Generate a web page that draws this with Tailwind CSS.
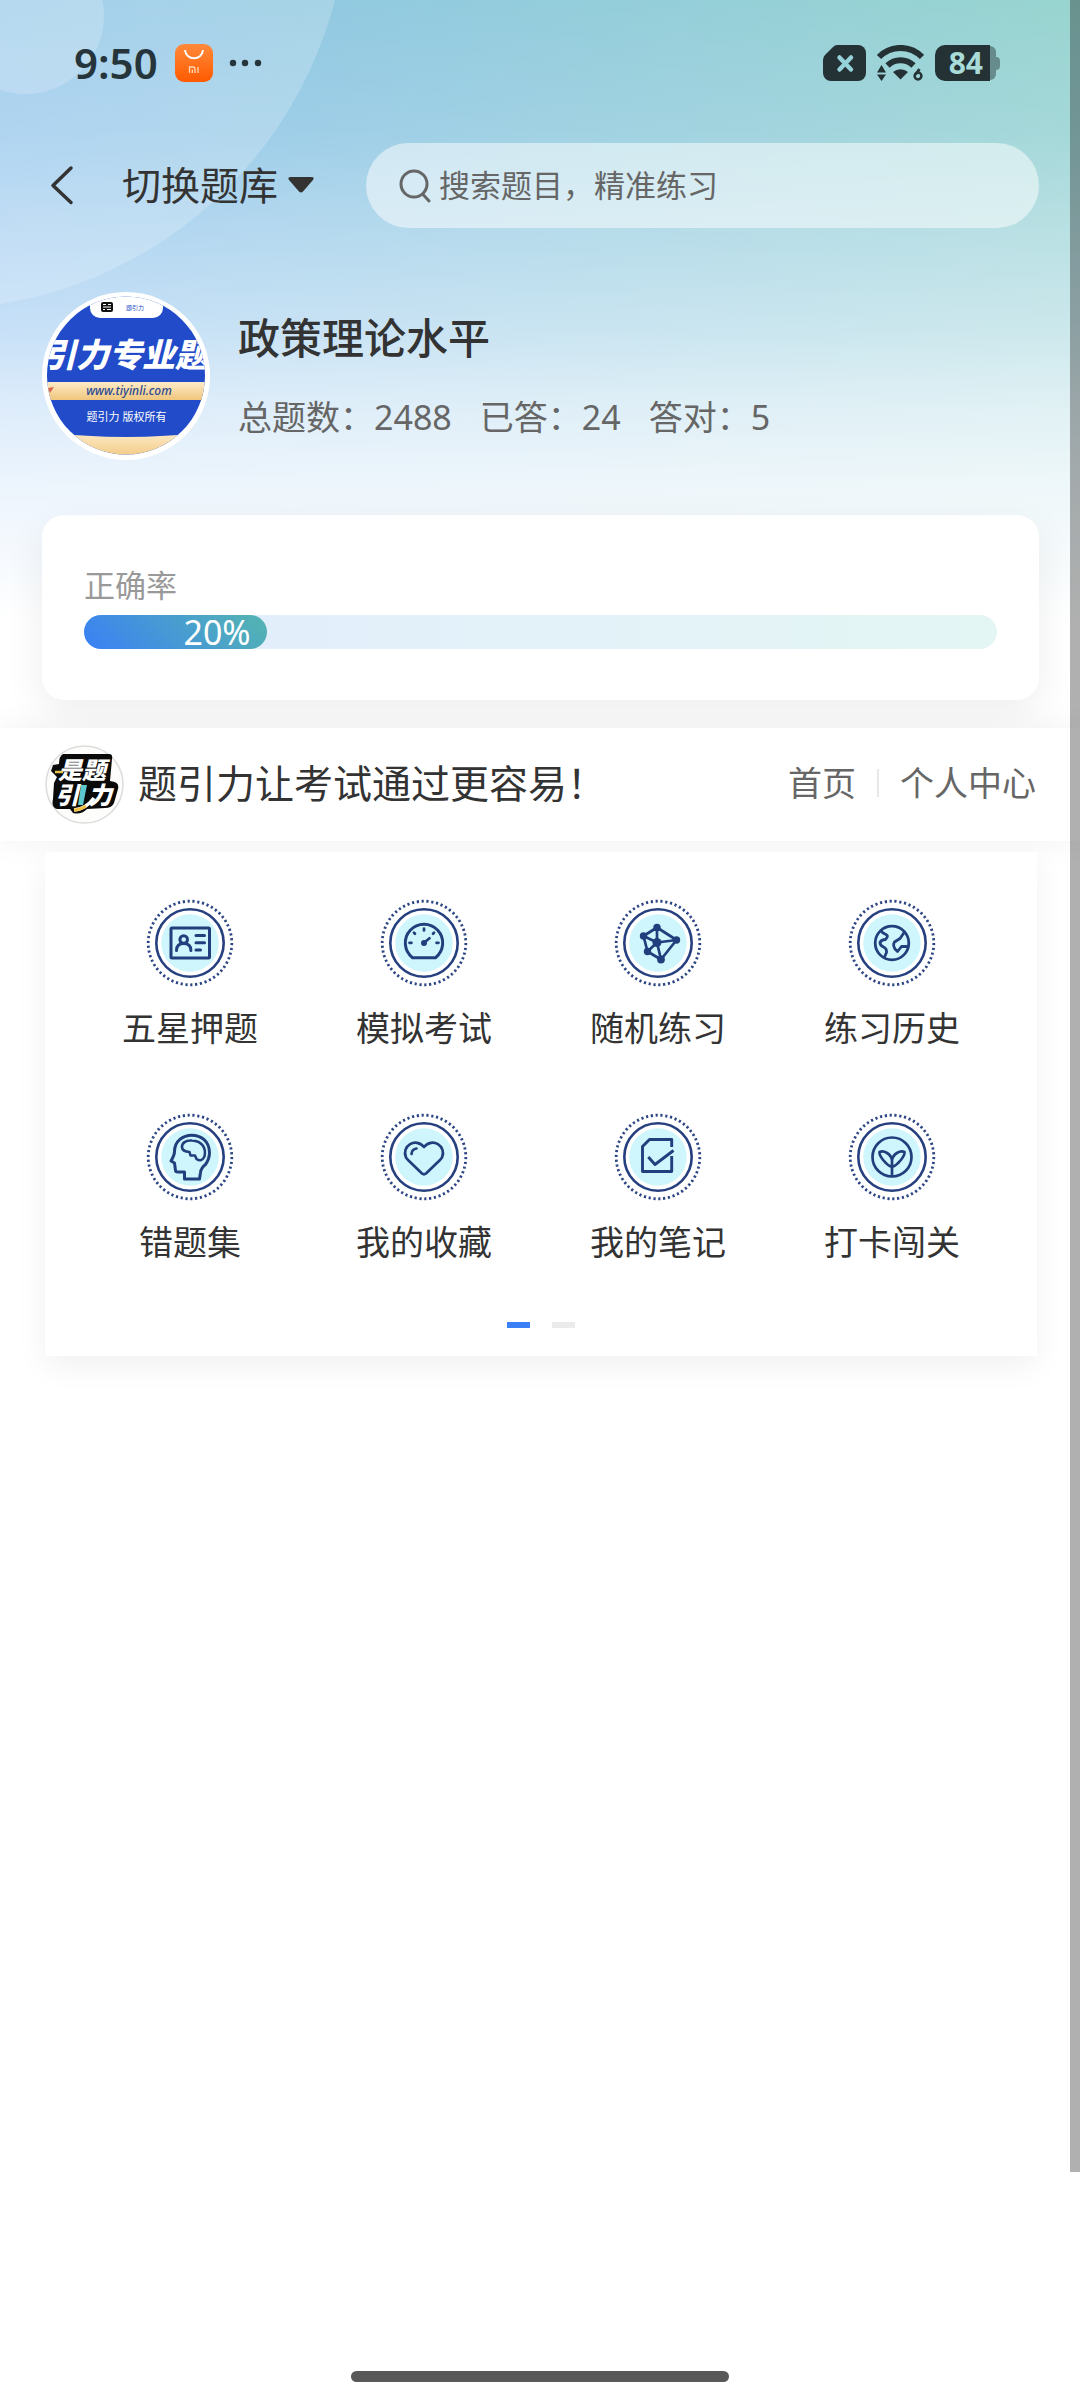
<!DOCTYPE html>
<html lang="zh-CN">
<head>
<meta charset="utf-8">
<meta name="viewport" content="width=device-width, initial-scale=1">
<title>题引力</title>
<script src="https://cdn.jsdelivr.net/npm/@tailwindcss/browser@4"></script>
</head>
<body class="bg-white">
<div class="relative flex min-h-screen flex-col overflow-hidden bg-[linear-gradient(180deg,rgba(255,255,255,0.4)_0px,rgba(255,255,255,0.48)_130px,rgba(255,255,255,0.61)_240px,rgba(255,255,255,0.71)_330px,rgba(255,255,255,0.82)_400px,rgba(255,255,255,0.9)_480px,rgba(255,255,255,0.95)_550px,#ffffff_620px),linear-gradient(45deg,#3a8ef0,#54b8b0)] bg-[length:100%_620px] bg-no-repeat font-['Noto_Sans','Noto_Sans_CJK_SC',sans-serif] text-[#333]">

  <!-- decorative circles -->
  <div class="absolute -left-[476px] -top-[515px] size-[824px] rounded-full bg-white/20"></div>
  <div class="absolute -left-[53px] -top-[63px] size-[157px] rounded-full bg-white/20"></div>

  <!-- status bar -->
  <div class="relative flex h-[126px] items-center pl-[74px] pr-[80px] text-[#25353b]">
    <span class="text-[42px] leading-[48px] font-semibold">9:50</span>
    <svg class="ml-[17px] h-[38px] w-[38px]" viewBox="0 0 38 38" fill="none">
      <defs><linearGradient id="mi" x1="0" y1="0" x2="0" y2="1"><stop offset="0" stop-color="#ff8a3a"/><stop offset="1" stop-color="#ff5a00"/></linearGradient></defs>
      <rect width="38" height="38" rx="9" fill="url(#mi)"/>
      <path d="M10 6c1 11 17 11 18 0" stroke="#fff" stroke-width="2"/>
      <path d="M14.500 29v-6h3.500q2 0 2 2v4M17.300 25.500V29M23 23v6" stroke="#ffd9b8" stroke-width="1.300"/>
    </svg>
    <svg class="ml-[16px] h-[8px] w-[34px]" viewBox="0 0 34 8" fill="currentColor"><circle cx="4" cy="4" r="3.200"/><circle cx="16" cy="4" r="3.200"/><circle cx="29" cy="4" r="3.200"/></svg>
    <svg class="ml-auto h-[36px] w-[43px]" viewBox="0 0 43 36"><path d="M14 0H35a8 8 0 0 1 8 8V28a8 8 0 0 1-8 8H8a8 8 0 0 1-8-8V15q0-3 2-5L10 2q2-2 4-2Z" fill="#243236"/><path d="M16.500 12.500 28 24.500M28 12.500 16.500 24.500" stroke="#96d2da" stroke-width="4.500" stroke-linecap="round"/></svg>
    <svg class="ml-[10px] h-[36px] w-[48px]" viewBox="0 0 48 36" fill="#243236">
      <path d="M3 12a30 30 0 0 1 43 0" fill="none" stroke="#243236" stroke-width="6"/>
      <path d="M11.500 20.500a18.500 18.500 0 0 1 26 0" fill="none" stroke="#243236" stroke-width="6"/>
      <path d="M17 27a11.500 11.500 0 0 1 15 0L24.500 34.500Z"/>
      <path d="M1 27.500 5.500 20 10 27.500ZM1 29.500H10L5.500 36Z"/>
      <path d="M43.500 24 39.500 29.500" fill="none" stroke="#243236" stroke-width="2.800"/><circle cx="42" cy="31" r="3.400" fill="none" stroke="#243236" stroke-width="2.500"/>
    </svg>
    <div class="ml-[11px] flex items-center">
      <div class="flex h-[36px] w-[55px] items-center justify-end rounded-l-[10px] bg-[#243236] pr-[7px] text-[30px] leading-[36px] font-bold text-[#a9dcd9]">84</div>
      <div class="h-[34px] w-[6px] rounded-r-[8px] bg-[#243236]/45"></div>
      <div class="h-[13px] w-[4px] rounded-r-[4px] bg-[#243236]/45"></div>
    </div>
  </div>

  <!-- header -->
  <header class="relative mt-[17px] flex h-[85px] items-center pl-[42px] pr-[41px]">
    <button type="button" aria-label="返回" class="h-[44px] w-[42px]"><svg class="h-[44px] w-[42px]" viewBox="0 0 42 44" fill="none" stroke="#333" stroke-width="3.500" stroke-linecap="round" stroke-linejoin="round"><path d="M29 4 11 21.500 29 38.500"/></svg></button>
    <button type="button" class="ml-[38px] flex items-center gap-[10px] pb-[2px] text-[39px] leading-[48px]">切换题库<svg class="h-[18px] w-[26px]" viewBox="0 0 26 18" fill="#333"><path d="M3 1H23q4 0 2 3L15 15.500q-2 2-4 0L1 4Q-1 1 3 1Z"/></svg></button>
    <label class="ml-[52px] flex h-full flex-1 items-center rounded-full bg-white/50 pl-[33px] text-[#666]">
      <svg class="h-[34px] w-[32px]" viewBox="0 0 32 34" fill="none" stroke="#666" stroke-width="3" stroke-linecap="round"><circle cx="15" cy="15" r="13"/><path d="M24.500 26 30 32"/></svg>
      <input type="search" aria-label="搜索题目" placeholder="搜索题目，精准练习" class="ml-[8px] h-full min-w-0 flex-1 bg-transparent pb-[2px] text-[31px] outline-none placeholder:text-[#666]">
    </label>
  </header>

  <!-- profile -->
  <section class="relative mt-[64px] flex h-[168px] items-center pl-[42px]">
    <svg class="size-[168px]" viewBox="0 0 168 168" role="img" aria-label="题引力专业题库">
      <defs>
        <clipPath id="av"><circle cx="84" cy="83.500" r="79"/></clipPath>
        <linearGradient id="gold" x1="0" y1="0" x2="0" y2="1"><stop offset="0" stop-color="#fdebc8"/><stop offset="1" stop-color="#f0c67c"/></linearGradient>
      </defs>
      <circle cx="84" cy="84" r="84" fill="#fff"/>
      <g clip-path="url(#av)">
        <rect width="168" height="168" fill="#214bc8"/>
        <rect x="48" y="-10" width="73" height="36" rx="10" fill="#fff"/>
        <rect x="59" y="10" width="12" height="10" rx="2" fill="#111"/>
        <path d="M61 12.500h3M66 12.500h3M61 15h8M61 17.500h2M65 17.500h4" stroke="#fff"/>
        <text x="84" y="18" font-size="6" fill="#214bc8">题引力</text>
        <text x="1" y="75" font-size="33" font-weight="900" font-style="italic" fill="#fff">引力专业题</text>
        <rect y="90" width="168" height="18" fill="url(#gold)"/>
        <path d="m6 96 6-1-4 6Z" fill="#d9654f"/>
        <text x="87" y="103" text-anchor="middle" font-size="12" font-weight="500" font-style="italic" fill="#2a4a94">www.tiyinli.com</text>
        <text x="84.500" y="129" text-anchor="middle" font-size="11" fill="#fff">题引力 版权所有</text>
        <path d="M0 140Q84 150 168 140V168H0Z" fill="url(#gold)"/>
      </g>
    </svg>
    <div class="ml-[28px] pt-[3px]">
      <h1 class="text-[42px] leading-[52px] font-medium">政策理论水平</h1>
      <p class="mt-[27px] flex gap-[28px] text-[34px] leading-[52px] text-[#666]"><span>总题数：2488</span><span>已答：24</span><span>答对：5</span></p>
    </div>
  </section>

  <!-- accuracy -->
  <section class="relative mt-[55px] ml-[42px] mr-[41px] h-[185px] rounded-[22px] bg-white px-[42px] pt-[50px] shadow-[0_14px_40px_rgba(0,0,0,0.07)]">
    <h2 class="text-[31px] leading-[40px] text-[#999]">正确率</h2>
    <div class="mt-[10px] h-[34px] rounded-full bg-linear-to-r from-[#e2edfd] to-[#e4f6f4]">
      <div class="flex h-full items-center justify-end rounded-full bg-[linear-gradient(45deg,#3a80f5,#54b5b0)] pr-[16px] text-[34px] leading-[34px] text-white" style="width:20%">20%</div>
    </div>
  </section>

  <!-- brand bar -->
  <nav class="relative mt-[28px] flex h-[113px] items-center bg-white pl-[45px] pr-[44px] shadow-[0_0_30px_rgba(0,0,0,0.06)]">
    <svg class="size-[79px]" viewBox="0 0 79 79" role="img" aria-label="题引力">
      <circle cx="39.500" cy="39.500" r="38.500" fill="#fdfdfb" stroke="#dcdcdc" stroke-width="1.500"/>
      <path d="M18 9H64Q68 9 67 14L65 36Q75 37 73 44L69 58Q67 63 60 63L42 64Q36 70 28 68L25 64H12Q6 62 8 54L9 38 12 32 6 26 8 20 14 19Q14 11 18 9Z" fill="#0a0a0a"/>
      <text font-size="24" font-weight="900" font-style="italic" fill="#fff"><tspan x="13" y="34">是题</tspan><tspan x="10" y="59">引</tspan><tspan x="43" y="59">力</tspan></text>
      <path d="M10 27h8" stroke="#e6c34c" stroke-width="2.500"/>
      <path d="M36 40h6l-4 20h-5Z" fill="#5cc9cf"/>
      <path d="M29 65q12-1 20-12" stroke="#fff" stroke-width="3.500" fill="none"/><path d="M29 65q6 0 12-4" stroke="#f0c040" stroke-width="3" fill="none"/>
    </svg>
    <span class="ml-[14px] pb-[3px] text-[39px] leading-[48px]">题引力让考试通过更容易！</span>
    <div class="ml-auto flex items-center pb-[3px] text-[34px] leading-[48px] text-[#666]">
      <a href="#">首页</a>
      <span class="mx-[21px] h-[28px] w-[2px] bg-[#e8e8e8]"></span>
      <a href="#">个人中心</a>
    </div>
  </nav>

  <!-- shared ring around each menu icon -->
  <svg class="absolute size-0" aria-hidden="true"><defs>
    <g id="ring" stroke-linecap="butt">
      <circle cx="44" cy="44" r="41.800" fill="none" stroke="#2c4583" stroke-width="2.800" pathLength="108" stroke-dasharray=".9 1.1"/>
      <circle cx="44" cy="44" r="33.700" fill="#fff" stroke="#26407f" stroke-width="2.600"/>
      <circle cx="44" cy="44" r="28.800" fill="#cff6fc" stroke="none"/>
    </g>
  </defs></svg>

  <!-- menu -->
  <main class="relative mt-[11px] ml-[45px] mr-[43px] bg-white px-[28px] pt-[47px] pb-[28px] shadow-[0_10px_30px_rgba(0,0,0,0.06)]">
    <div class="grid grid-cols-4 gap-y-[65px] text-[34px] leading-[40px]">
      <a href="#" class="flex flex-col items-center gap-[21px]">
        <svg class="size-[88px]" viewBox="0 0 88 88" fill="none" stroke="#213f7d" stroke-width="3" stroke-linecap="round" stroke-linejoin="round"><use href="#ring"/>
          <rect x="25" y="29" width="38.500" height="30" rx="1"/><circle cx="37.700" cy="40.500" r="3.800"/><path d="M30.500 51.500q0-7 7.200-7t7.200 7M50 36.500h8.500M50 43.800h8.500M50 51h4.500"/></svg>五星押题</a>
      <a href="#" class="flex flex-col items-center gap-[21px]">
        <svg class="size-[88px]" viewBox="0 0 88 88" fill="none" stroke="#213f7d" stroke-width="3" stroke-linecap="round" stroke-linejoin="round"><use href="#ring"/>
          <path d="M32.500 58.700A18.700 18.700 0 1 1 55.500 58.700Z"/><path d="M29.500 43.800h2M56.500 43.800h2M44 29.500v2M34 33.700l1 1M54 33.700l-1 1M44 43.800l5.500-4.500" stroke-width="2.700"/><circle cx="44" cy="44" r="1.500" fill="#213f7d"/></svg>模拟考试</a>
      <a href="#" class="flex flex-col items-center gap-[21px]">
        <svg class="size-[88px]" viewBox="0 0 88 88" fill="none" stroke="#213f7d" stroke-width="2.700" stroke-linecap="round" stroke-linejoin="round"><use href="#ring"/>
          <path d="M43 28.500 29.500 37 33.500 52.500 47 60.500 62.500 41ZM43 43.500V28.500M43 43.500 29.500 37M43 43.500 33.500 52.500M43 43.500 47 60.500M43 43.500 62.500 41"/><g fill="#213f7d" stroke="none"><circle cx="43" cy="28.500" r="3.700"/><circle cx="29.500" cy="37" r="3.700"/><circle cx="33.500" cy="52.500" r="3.700"/><circle cx="47" cy="60.500" r="3.900"/><circle cx="62.500" cy="41" r="3.700"/><circle cx="43" cy="43.500" r="4.500"/></g></svg>随机练习</a>
      <a href="#" class="flex flex-col items-center gap-[21px]">
        <svg class="size-[88px]" viewBox="0 0 88 88" fill="none" stroke="#213f7d" stroke-width="2.800" stroke-linecap="round" stroke-linejoin="round"><use href="#ring"/>
          <circle cx="44" cy="44" r="16.800"/><path d="M33 31.500Q34 34 38 35.500q2 1 1 3l-1.500 2q-4 0-5.500 3 0 3 3.500 4.500 3.500 1.500 3 5.500L36.500 58M56.500 33l-4.500 6.500-5.500 3.500q-2 3 .5 7l2.500 2.500 4-5h5"/></svg>练习历史</a>
      <a href="#" class="flex flex-col items-center gap-[21px]">
        <svg class="size-[88px]" viewBox="0 0 88 88" fill="none" stroke="#213f7d" stroke-width="3" stroke-linecap="round" stroke-linejoin="round"><use href="#ring"/>
          <path d="M38.500 66H53.500L54.500 59.500Q55 55 59.500 51.500 63.500 46 63.500 39.500C63 16 28.500 17 28.500 38.500Q28.500 42 25 48L28.500 50 29.500 57.500Q29.500 59 32 59H38.500Z"/><path d="M46 27.500C40 27 35.500 30 36 34.500Q36.500 38.500 43.500 39l1 3.500 4.500 0 1.500 3.500q5 3.500 8-2.500C60.500 35 56 28 46 27.500Z" stroke-width="2.600"/></svg>错题集</a>
      <a href="#" class="flex flex-col items-center gap-[21px]">
        <svg class="size-[88px]" viewBox="0 0 88 88" fill="none" stroke="#213f7d" stroke-width="2.700" stroke-linecap="round" stroke-linejoin="round"><use href="#ring"/>
          <path d="M44 34C36 24 21 33 26 44.500Q27 46 28.500 47.500L42 60.500q2 1.500 4 0L59.500 47.500Q61 46 62 44.500C67 33 52 24 44 34Z"/><path d="M31.500 41Q32 36 36.500 35.500"/></svg>我的收藏</a>
      <a href="#" class="flex flex-col items-center gap-[21px]">
        <svg class="size-[88px]" viewBox="0 0 88 88" fill="none" stroke="#213f7d" stroke-width="2.900" stroke-linejoin="round"><use href="#ring"/>
          <path d="M57.700 34V26.500H35.500L28.500 33.500V58.500H57.700V43"/><path d="M34.300 44 41 51.500 59.500 37.500"/></svg>我的笔记</a>
      <a href="#" class="flex flex-col items-center gap-[21px]">
        <svg class="size-[88px]" viewBox="0 0 88 88" fill="none" stroke="#213f7d" stroke-width="2.700" stroke-linecap="round" stroke-linejoin="round"><use href="#ring"/>
          <circle cx="44" cy="44" r="19.500"/><path d="M44 46V63M44 54C38 52 31 43 31.500 39 36 37 43 41 44 47 45 41 52 37 56.500 39 57 43 50 52 44 54Z"/></svg>打卡闯关</a>
    </div>
    <div class="mt-[60px] flex justify-center gap-[22px]">
      <span class="h-[6px] w-[23px] bg-[#3b7ff5]"></span>
      <span class="h-[6px] w-[23px] bg-[#ebebeb]"></span>
    </div>
  </main>

  <!-- home indicator -->
  <div class="mt-auto flex justify-center pb-[18px]"><div class="h-[11px] w-[35%] rounded-full bg-[#595959]"></div></div>

  <!-- edge strip of the page behind -->
  <div class="absolute top-0 right-0 h-[90.5%] w-[10px] bg-black/31"></div>
</div>
</body>
</html>
